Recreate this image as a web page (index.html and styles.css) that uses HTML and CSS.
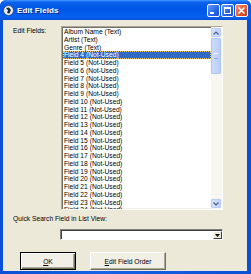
FILE: index.html
```html
<!DOCTYPE html>
<html lang="en">
<head>
    <meta charset="UTF-8">
    <title>Edit Fields</title>
    <link rel="stylesheet" href="styles.css">
</head>
<body>
    <div class="window">
        <div class="titlebar">
            <svg class="title-icon" width="11" height="11" viewBox="0 0 11 11">
                <circle cx="5.5" cy="5.5" r="5" fill="#e8ecf4" stroke="#2a3f6a" stroke-width="0.8"/>
                <path d="M3 3 L6 2.5 L8 5 L6.5 8.5 L4 8 L5 5.5 Z" fill="#1c2740"/>
            </svg>
            <span class="title-text">Edit Fields</span>
            <div class="title-buttons">
                <div class="tbtn"><span class="min-glyph"></span></div>
                <div class="tbtn"><span class="max-glyph"></span></div>
                <div class="tbtn close">
                    <svg width="9" height="9" viewBox="0 0 9 9">
                        <path d="M1.5 1.5 L7.5 7.5 M7.5 1.5 L1.5 7.5" stroke="#fff" stroke-width="1.6"/>
                    </svg>
                </div>
            </div>
        </div>

        <div class="client">
            <div class="fields-row">
                <div class="label">Edit Fields:</div>
                <div class="listbox">
                    <div class="list-items">
                        <div class="item">Album Name (Text)</div>
                        <div class="item">Artist (Text)</div>
                        <div class="item">Genre (Text)</div>
                        <div class="item selected">Field 4 (Not-Used)</div>
                        <div class="item">Field 5 (Not-Used)</div>
                        <div class="item">Field 6 (Not-Used)</div>
                        <div class="item">Field 7 (Not-Used)</div>
                        <div class="item">Field 8 (Not-Used)</div>
                        <div class="item">Field 9 (Not-Used)</div>
                        <div class="item">Field 10 (Not-Used)</div>
                        <div class="item">Field 11 (Not-Used)</div>
                        <div class="item">Field 12 (Not-Used)</div>
                        <div class="item">Field 13 (Not-Used)</div>
                        <div class="item">Field 14 (Not-Used)</div>
                        <div class="item">Field 15 (Not-Used)</div>
                        <div class="item">Field 16 (Not-Used)</div>
                        <div class="item">Field 17 (Not-Used)</div>
                        <div class="item">Field 18 (Not-Used)</div>
                        <div class="item">Field 19 (Not-Used)</div>
                        <div class="item">Field 20 (Not-Used)</div>
                        <div class="item">Field 21 (Not-Used)</div>
                        <div class="item">Field 22 (Not-Used)</div>
                        <div class="item">Field 23 (Not-Used)</div>
                        <div class="item">Field 24 (Not-Used)</div>
                    </div>
                    <div class="scrollbar">
                        <div class="sb-btn">
                            <svg width="6" height="4" viewBox="0 0 6 4"><path d="M0.5 3.5 L3 1 L5.5 3.5" fill="none" stroke="#4d6185" stroke-width="1.2"/></svg>
                        </div>
                        <div class="sb-track">
                            <div class="sb-thumb"><span class="grip"></span></div>
                        </div>
                        <div class="sb-btn">
                            <svg width="6" height="4" viewBox="0 0 6 4"><path d="M0.5 0.5 L3 3 L5.5 0.5" fill="none" stroke="#4d6185" stroke-width="1.2"/></svg>
                        </div>
                    </div>
                </div>
            </div>

            <div class="label quick-label">Quick Search Field in List View:</div>

            <div class="combo">
                <div class="combo-value"></div>
                <div class="combo-btn">
                    <svg width="5" height="3" viewBox="0 0 5 3"><path d="M0 0 H5 L2.5 3 Z" fill="#000"/></svg>
                </div>
            </div>

            <div class="button-row">
                <button class="btn default"><u>O</u>K</button>
                <button class="btn wide"><u>E</u>dit Field Order</button>
            </div>
        </div>
    </div>
</body>
</html>
```

FILE: styles.css
```css
body {
    margin: 0;
    background: #ffffff;
    font-family: "Liberation Sans", Arial, sans-serif;
}

.window {
    width: 251px;
    height: 274px;
    display: flex;
    flex-direction: column;
    background: linear-gradient(to right, #0a4fd8, #1662ea 40%, #0a4fd8);
    border-radius: 6px 6px 0 0;
    overflow: hidden;
}

.titlebar {
    height: 20px;
    display: flex;
    align-items: center;
    padding: 0 3px 0 3px;
    background: linear-gradient(to bottom, #3d95ff 0%, #0a62ec 12%, #0055e5 45%, #0660f0 85%, #0a50d6 100%);
}

.title-icon {
    flex: none;
}

.title-text {
    margin-left: 3px;
    color: #ffffff;
    font-weight: bold;
    font-size: 8px;
    text-shadow: 1px 1px 0 #0a2a8a;
    letter-spacing: 0.1px;
}

.title-buttons {
    margin-left: auto;
    display: flex;
    gap: 1px;
}

.tbtn {
    width: 11px;
    height: 11px;
    border: 1px solid #ffffff;
    border-radius: 2px;
    background: linear-gradient(135deg, #6a9cf8, #2664e8 60%, #1b50d0);
    display: flex;
    align-items: center;
    justify-content: center;
    position: relative;
}

.tbtn.close {
    background: linear-gradient(135deg, #f4906a, #e4542c 60%, #c83c1c);
}

.min-glyph {
    position: absolute;
    left: 2px;
    bottom: 2px;
    width: 4px;
    height: 2px;
    background: #ffffff;
}

.max-glyph {
    width: 5px;
    height: 4px;
    border: 1px solid #ffffff;
    border-top-width: 2px;
}

.client {
    flex: 1;
    margin: 0 4px 3px 3px;
    background: #ece9d8;
    padding: 6px 0 0 10px;
    display: flex;
    flex-direction: column;
}

.label {
    font-size: 6.7px;
    line-height: 8px;
    color: #000000;
}

.fields-row {
    display: flex;
}

.fields-row .label {
    width: 48px;
    padding-top: 1px;
}

.listbox {
    width: 162px;
    height: 184px;
    box-sizing: border-box;
    display: flex;
    background: #ffffff;
    border-top: 1px solid #aca899;
    border-left: 1px solid #aca899;
    border-right: 1px solid #ffffff;
    border-bottom: 1px solid #ffffff;
    box-shadow: inset 1px 1px 0 #716f64, inset -1px -1px 0 #f1efe2;
}

.list-items {
    flex: 1;
    overflow: hidden;
    padding: 1px 0 0 1px;
}

.item {
    height: 7.75px;
    line-height: 7.75px;
    font-size: 6.7px;
    padding-left: 1px;
    white-space: nowrap;
    color: #000000;
}

.item.selected {
    background: #316ac5;
    color: #ffffff;
    outline: 1px dotted #e8c870;
    outline-offset: -1px;
}

.scrollbar {
    width: 10px;
    display: flex;
    flex-direction: column;
    background: #f7f6f1;
    padding: 1px 1px 1px 0;
}

.sb-btn {
    height: 9px;
    box-sizing: border-box;
    border: 1px solid #b9cdf8;
    border-radius: 1px;
    background: linear-gradient(to right, #d6e2fd, #bfd2fb);
    display: flex;
    align-items: center;
    justify-content: center;
}

.sb-track {
    flex: 1;
    padding-top: 1px;
}

.sb-thumb {
    height: 36px;
    box-sizing: border-box;
    border: 1px solid #aec6f7;
    border-radius: 1px;
    background: linear-gradient(to right, #cddcfc, #b9cdfa);
    display: flex;
    align-items: center;
    justify-content: center;
}

.grip {
    width: 4px;
    height: 4px;
    border-top: 1px solid #eef3fe;
    border-bottom: 1px solid #8fadea;
}

.quick-label {
    margin-top: 5px;
}

.combo {
    margin: 6px 0 0 47px;
    width: 163px;
    height: 11px;
    box-sizing: border-box;
    display: flex;
    background: #ffffff;
    border-top: 1px solid #808080;
    border-left: 1px solid #808080;
    border-right: 1px solid #ffffff;
    border-bottom: 1px solid #ffffff;
    box-shadow: inset 1px 1px 0 #404040;
}

.combo-value {
    flex: 1;
}

.combo-btn {
    width: 9px;
    margin: 1px 0 0 0;
    box-sizing: border-box;
    background: #ece9d8;
    border-top: 1px solid #ffffff;
    border-left: 1px solid #ffffff;
    border-right: 1px solid #404040;
    border-bottom: 1px solid #404040;
    display: flex;
    align-items: center;
    justify-content: center;
}

.button-row {
    display: flex;
    gap: 14px;
    margin: 12px 0 0 7px;
}

.btn {
    width: 56px;
    height: 18px;
    box-sizing: border-box;
    padding: 0;
    font-family: "Liberation Sans", Arial, sans-serif;
    font-size: 6.7px;
    color: #000000;
    background: #f1efe6;
    border-top: 1px solid #ffffff;
    border-left: 1px solid #ffffff;
    border-right: 1px solid #716f64;
    border-bottom: 1px solid #716f64;
    box-shadow: inset -1px -1px 0 #aca899;
}

.btn.default {
    border: 1px solid #000000;
    box-shadow: inset 1px 1px 0 #ffffff, inset -1px -1px 0 #716f64, inset -2px -2px 0 #aca899;
}

.btn.wide {
    width: 76px;
}
```
